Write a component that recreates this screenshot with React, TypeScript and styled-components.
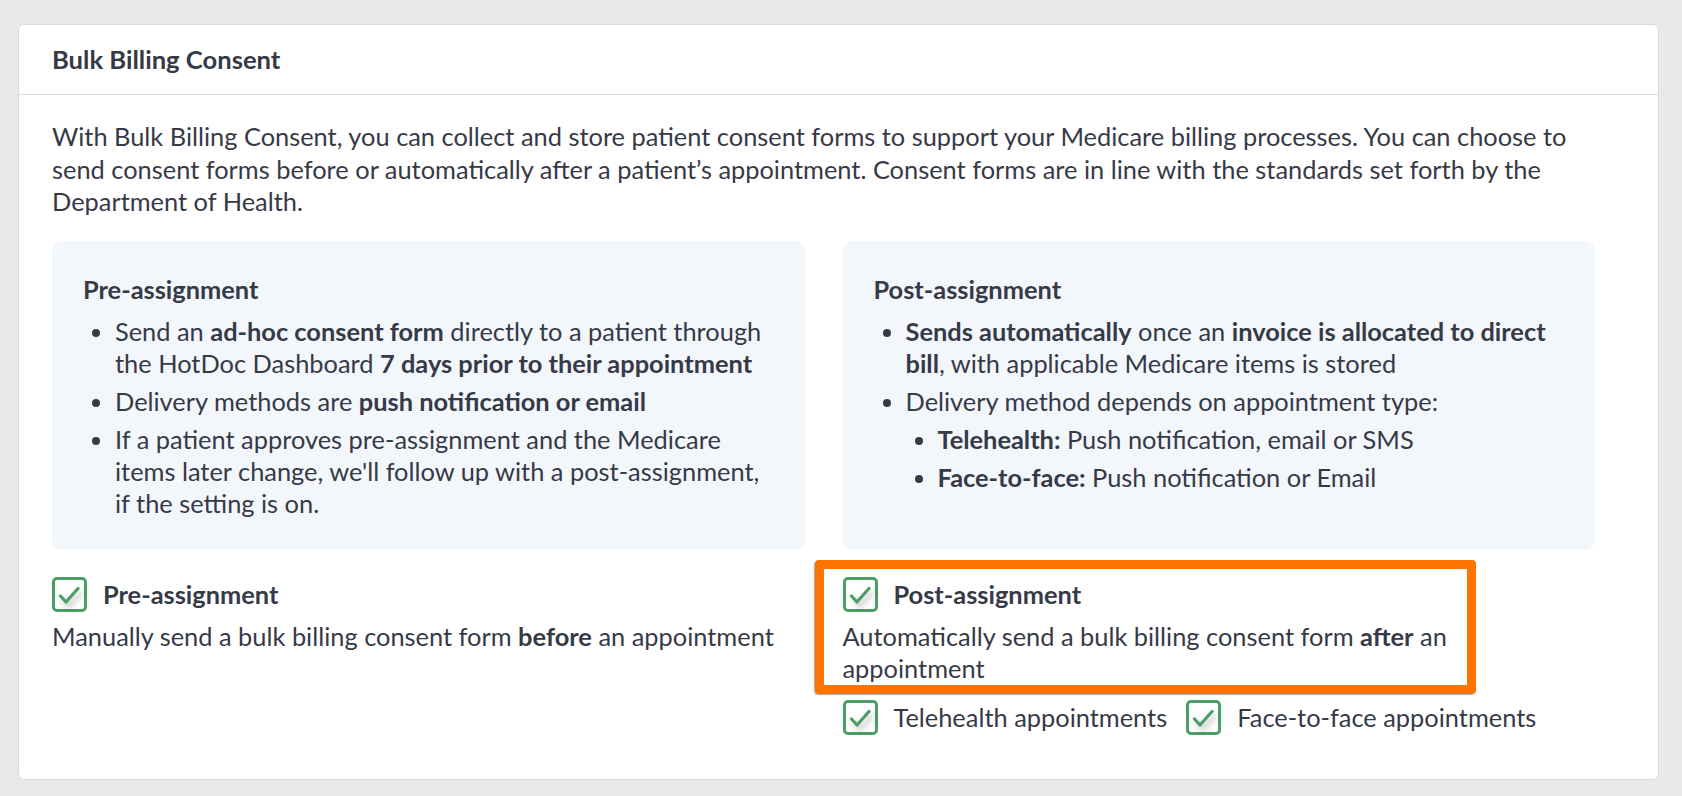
import React from "react";
import styled, { createGlobalStyle } from "styled-components";

const GlobalStyle = createGlobalStyle`
  html, body {
    margin: 0;
    padding: 0;
    background: #e8e9eb;
  }
  body {
    font-family: "Lato", "Noto Sans", sans-serif;
    color: #363a47;
    -webkit-font-smoothing: antialiased;
  }
  * { box-sizing: border-box; }
`;

const Page = styled.div`
  padding: 24px 23px 17px 18px;
`;

const Card = styled.section`
  background: #ffffff;
  border: 1px solid #d8dadd;
  border-radius: 6px;
`;

const CardHeader = styled.header`
  padding: 18px 33px 19px;
  border-bottom: 1px solid #dcdee1;
`;

const Title = styled.h2`
  margin: 0;
  font-size: 25.6px;
  line-height: 32px;
  font-weight: 700;
  color: #353945;
`;

const CardBody = styled.div`
  padding: 25px 63px 44px 33px;
`;

const Intro = styled.p`
  margin: 0 0 23px;
  font-size: 25.4px;
  line-height: 32.5px;
`;

const Columns = styled.div`
  display: grid;
  grid-template-columns: 1fr 1fr;
  column-gap: 38px;
  row-gap: 27px;
`;

const InfoBox = styled.div`
  background: #f3f6fb;
  border-radius: 10px;
  padding: 32px 31px 31px;
`;

const InfoTitle = styled.h3`
  margin: 0;
  font-size: 25.4px;
  line-height: 32px;
  font-weight: 700;
`;

const BulletList = styled.ul<{ $nested?: boolean }>`
  margin: ${(p) => (p.$nested ? "6px 0 0" : "10px 0 0")};
  padding-left: 32px;
  list-style: disc;
`;

const Item = styled.li`
  font-size: 25.4px;
  line-height: 32px;
  & + & {
    margin-top: 6px;
  }
  b {
    font-weight: 700;
  }
`;

const Option = styled.div`
  display: flex;
  flex-direction: column;
`;

const OptionHead = styled.div`
  display: flex;
  align-items: center;
  gap: 16px;
`;

const OptionLabel = styled.span<{ $bold?: boolean }>`
  font-size: 25.4px;
  line-height: 32px;
  font-weight: ${(p) => (p.$bold ? 700 : 400)};
`;

const OptionDesc = styled.p`
  margin: 8px 0 0;
  font-size: 25.4px;
  line-height: 32px;
  b {
    font-weight: 700;
  }
`;

const RightOptions = styled.div`
  display: flex;
  flex-direction: column;
`;

const Highlight = styled.div`
  width: 661px;
  margin: -17px 0 0 -28px;
  padding: 8px 10px 1px 19px;
  border: 9px solid #ff7300;
  border-radius: 4px;
  box-shadow: -1px 1px 1px rgba(60, 60, 60, 0.45);
`;

const SubRow = styled.div`
  display: flex;
  align-items: center;
  margin-top: 6px;
`;

const SubItem = styled.label`
  display: flex;
  align-items: center;
  gap: 16px;
  & + & {
    margin-left: 19px;
  }
`;

const Box = styled.span`
  flex: 0 0 auto;
  width: 35px;
  height: 35px;
  border: 3px solid #4c9d67;
  border-radius: 5px;
  background: #ffffff;
  display: flex;
  align-items: center;
  justify-content: center;
  svg {
    display: block;
    filter: drop-shadow(3px 4px 3px rgba(0, 0, 0, 0.28));
  }
`;

const Check = () => (
  <Box>
    <svg width="29" height="29" viewBox="0 0 29 29">
      <path
        d="M5.5 16 L11 22 L23 8.5"
        fill="none"
        stroke="#4c9d67"
        strokeWidth="3.2"
        strokeLinecap="round"
        strokeLinejoin="round"
      />
    </svg>
  </Box>
);

export default function App() {
  return (
    <>
      <GlobalStyle />
      <Page>
        <Card>
          <CardHeader>
            <Title>Bulk Billing Consent</Title>
          </CardHeader>
          <CardBody>
            <Intro>
              With Bulk Billing Consent, you can collect and store patient consent forms to support
              your Medicare billing processes. You can choose to send consent forms before or
              automatically after a patient’s appointment. Consent forms are in line with the
              standards set forth by the Department of Health.
            </Intro>
            <Columns>
              <InfoBox>
                <InfoTitle>Pre-assignment</InfoTitle>
                <BulletList>
                  <Item>
                    Send an <b>ad-hoc consent form</b> directly to a patient through the HotDoc
                    Dashboard <b>7 days prior to their appointment</b>
                  </Item>
                  <Item>
                    Delivery methods are <b>push notification or email</b>
                  </Item>
                  <Item>
                    If a patient approves pre-assignment and the Medicare items later change,
                    we'll follow up with a post-assignment, if the setting is on.
                  </Item>
                </BulletList>
              </InfoBox>
              <InfoBox>
                <InfoTitle>Post-assignment</InfoTitle>
                <BulletList>
                  <Item>
                    <b>Sends automatically</b> once an <b>invoice is allocated to direct bill</b>,
                    with applicable Medicare items is stored
                  </Item>
                  <Item>
                    Delivery method depends on appointment type:
                    <BulletList $nested>
                      <Item>
                        <b>Telehealth:</b> Push notification, email or SMS
                      </Item>
                      <Item>
                        <b>Face-to-face:</b> Push notification or Email
                      </Item>
                    </BulletList>
                  </Item>
                </BulletList>
              </InfoBox>

              <Option>
                <OptionHead>
                  <Check />
                  <OptionLabel $bold>Pre-assignment</OptionLabel>
                </OptionHead>
                <OptionDesc>
                  Manually send a bulk billing consent form <b>before</b> an appointment
                </OptionDesc>
              </Option>

              <RightOptions>
                <Highlight>
                  <Option>
                    <OptionHead>
                      <Check />
                      <OptionLabel $bold>Post-assignment</OptionLabel>
                    </OptionHead>
                    <OptionDesc>
                      Automatically send a bulk billing consent form <b>after</b> an appointment
                    </OptionDesc>
                  </Option>
                </Highlight>
                <SubRow>
                  <SubItem>
                    <Check />
                    <OptionLabel>Telehealth appointments</OptionLabel>
                  </SubItem>
                  <SubItem>
                    <Check />
                    <OptionLabel>Face-to-face appointments</OptionLabel>
                  </SubItem>
                </SubRow>
              </RightOptions>
            </Columns>
          </CardBody>
        </Card>
      </Page>
    </>
  );
}
